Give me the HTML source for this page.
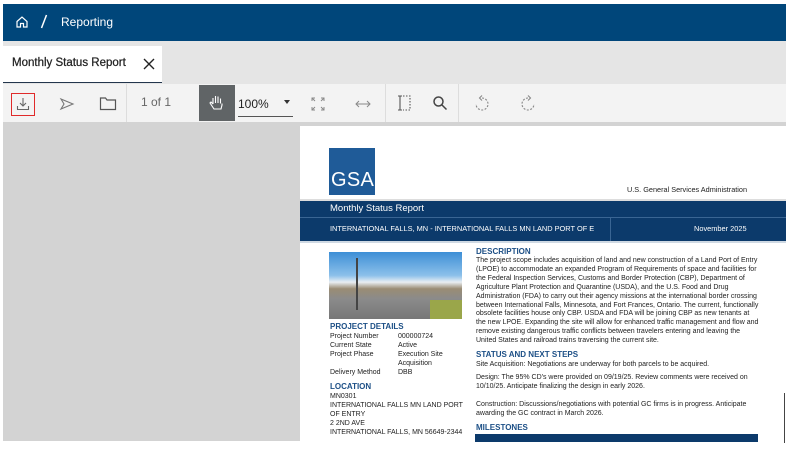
<!DOCTYPE html>
<html><head><meta charset="utf-8"><style>
*{margin:0;padding:0;box-sizing:border-box}
body{width:786px;height:454px;overflow:hidden;background:#fff;font-family:"Liberation Sans",sans-serif;position:relative}
.a{position:absolute}
.t{position:absolute;font-size:7px;color:#222;white-space:nowrap;line-height:9px}
.h{position:absolute;font-size:8px;font-weight:bold;color:#1c4f86;white-space:nowrap}
.ico{position:absolute}
</style></head><body>
<div class="a" style="left:3px;top:4px;width:783px;height:37px;background:#00467a"></div>
<svg class="ico" style="left:15px;top:15px" width="14" height="14" viewBox="0 0 14 14" fill="none" stroke="#fff" stroke-width="1.2"><path d="M2 6.5L7 2l5 4.5V12H8.5V8.5h-3V12H2z"/></svg>
<svg class="ico" style="left:40px;top:14px" width="8" height="15" viewBox="0 0 8 15" stroke="#fff" stroke-width="1.5"><path d="M6.5 1L1.5 14"/></svg>
<div class="a" style="left:61px;top:15px;color:#fff;font-size:12px">Reporting</div>

<div class="a" style="left:3px;top:41px;width:783px;height:43px;background:#e5e5e5"></div>
<div class="a" style="left:3px;top:46px;width:159px;height:37px;background:#fff;border-bottom:1.5px solid #23364d"></div>
<div class="a" style="left:12px;top:57px;font-size:11.5px;color:#222;-webkit-text-stroke:0.25px #222">Monthly Status Report</div>
<svg class="ico" style="left:143px;top:58px" width="12" height="12" viewBox="0 0 12 12" stroke="#222" stroke-width="1.4"><path d="M1 1l10 10M11 1L1 11"/></svg>

<div class="a" style="left:3px;top:84px;width:783px;height:38px;background:#f3f3f3"></div>
<div class="a" style="left:126px;top:84px;width:1px;height:38px;background:#ddd"></div>
<div class="a" style="left:385px;top:84px;width:1px;height:38px;background:#ddd"></div>
<div class="a" style="left:458px;top:84px;width:1px;height:38px;background:#ddd"></div>
<div class="a" style="left:11px;top:93px;width:24px;height:23px;border:1.5px solid #e02a2a"></div>
<svg class="ico" style="left:15px;top:96px" width="16" height="16" viewBox="0 0 16 16" fill="none" stroke="#666" stroke-width="1.1"><path d="M8 2v8M5 7l3 3 3-3M2.5 10v3.5h11V10"/></svg>
<svg class="ico" style="left:59px;top:97px" width="16" height="14" viewBox="0 0 16 14" fill="none" stroke="#777" stroke-width="1.1"><path d="M2 2l12 5-12 5 3-5z"/></svg>
<svg class="ico" style="left:99px;top:96px" width="18" height="15" viewBox="0 0 18 15" fill="none" stroke="#555" stroke-width="1.2"><path d="M1.5 2h5l1.5 2h8.5v9.5h-15z"/></svg>
<div class="a" style="left:141px;top:95px;font-size:12px;color:#666">1 of 1</div>
<div class="a" style="left:199px;top:85px;width:36px;height:36px;background:#606466"></div>
<svg class="ico" style="left:207px;top:93px" width="20" height="20" viewBox="0 0 20 20" fill="none" stroke="#fff" stroke-width="1.1"><path d="M6 11V5M8.5 10V3M11 10V3.5M13.5 10.5V5.5M6 11l-2-2-1 1 4 6h7l1-4v-1.5"/></svg>
<div class="a" style="left:238px;top:97px;font-size:12px;color:#222">100%</div>
<div class="a" style="left:238px;top:116px;width:55px;height:1px;background:#555"></div>
<div class="a" style="left:284px;top:100px;border-left:3px solid transparent;border-right:3px solid transparent;border-top:4px solid #333"></div>
<svg class="ico" style="left:310px;top:96px" width="16" height="16" viewBox="0 0 16 16" fill="none" stroke="#888" stroke-width="1"><path d="M2 5V2h3M2 2l3 3M14 5V2h-3M14 2l-3 3M2 11v3h3M2 14l3-3M14 11v3h-3M14 14l-3-3"/></svg>
<svg class="ico" style="left:354px;top:98px" width="18" height="12" viewBox="0 0 18 12" fill="none" stroke="#888" stroke-width="1"><path d="M2 6h14M5 3L2 6l3 3M13 3l3 3-3 3"/></svg>
<svg class="ico" style="left:396px;top:94px" width="16" height="18" viewBox="0 0 16 18" fill="none" stroke="#555" stroke-width="1.1"><path d="M2 2h4M2 16h4M4 2v14"/><path d="M7 2h7v14H7" stroke-dasharray="1.5 1.5"/></svg>
<svg class="ico" style="left:432px;top:95px" width="16" height="16" viewBox="0 0 16 16" fill="none" stroke="#444" stroke-width="1.5"><circle cx="6.5" cy="6.5" r="4.5"/><path d="M10 10l4.5 4.5"/></svg>
<svg class="ico" style="left:474px;top:94px" width="16" height="18" viewBox="0 0 16 18" fill="none" stroke="#888" stroke-width="1.1"><path d="M8 4a6 6 0 1 1-6 6" stroke-dasharray="2 1.5"/><path d="M8 1.5L5.5 4 8 6.5"/></svg>
<svg class="ico" style="left:520px;top:94px" width="16" height="18" viewBox="0 0 16 18" fill="none" stroke="#888" stroke-width="1.1"><path d="M8 4a6 6 0 1 0 6 6" stroke-dasharray="2 1.5"/><path d="M8 1.5L10.5 4 8 6.5"/></svg>

<div class="a" style="left:3px;top:122px;width:783px;height:4px;background:#d3d3d3"></div>
<div class="a" style="left:3px;top:126px;width:297px;height:315px;background:#d3d3d3"></div>

<div class="a" style="left:329px;top:148px;width:46px;height:47px;background:#1f5b98"></div>
<div class="a" style="left:331px;top:170px;font-size:20px;line-height:20px;color:#fff;letter-spacing:0.3px">GSA</div>
<div class="t" style="left:627px;top:185px;font-size:7.3px">U.S. General Services Administration</div>
<div class="a" style="left:300px;top:199px;width:486px;height:2px;background:#ddd"></div>
<div class="a" style="left:300px;top:201px;width:486px;height:40px;background:#0c3a6b"></div>
<div class="a" style="left:300px;top:217px;width:486px;height:1px;background:#3a6593"></div>
<div class="a" style="left:610px;top:218px;width:1px;height:23px;background:#3a6593"></div>
<div class="t" style="left:330px;top:204px;font-size:9.5px;color:#fff">Monthly Status Report</div>
<div class="t" style="left:330px;top:224px;font-size:7.4px;color:#fff">INTERNATIONAL FALLS, MN - INTERNATIONAL FALLS MN LAND PORT OF E</div>
<div class="t" style="left:694px;top:224px;font-size:7.4px;color:#fff">November 2025</div>
<div class="a" style="left:300px;top:241px;width:486px;height:2px;background:#cfd9e3"></div>

<div class="a" style="left:329px;top:252px;width:133px;height:67px;background:linear-gradient(#3d8fd6 0%,#8cc0ea 35%,#e9eef2 45%,#9a8c74 55%,#8b8b8b 70%,#777 100%)"></div>
<div class="a" style="left:430px;top:300px;width:32px;height:19px;background:#9aa64a"></div>
<div class="a" style="left:356px;top:258px;width:2px;height:52px;background:#444"></div>

<div class="h" style="left:330px;top:322px">PROJECT DETAILS</div>
<div class="t" style="left:330px;top:332px">Project Number<br>Current State<br>Project Phase<br><br>Delivery Method</div>
<div class="t" style="left:398px;top:332px">000000724<br>Active<br>Execution Site<br>Acquisition<br>DBB</div>
<div class="h" style="left:330px;top:382px">LOCATION</div>
<div class="t" style="left:330px;top:392px">MN0301<br>INTERNATIONAL FALLS MN LAND PORT<br>OF ENTRY<br>2 2ND AVE<br>INTERNATIONAL FALLS, MN 56649-2344</div>

<div class="h" style="left:476px;top:247px">DESCRIPTION</div>
<div class="t" style="left:476px;top:257px;line-height:8.9px">The project scope includes acquisition of land and new construction of a Land Port of Entry<br>(LPOE) to accommodate an expanded Program of Requirements of space and facilities for<br>the Federal Inspection Services, Customs and Border Protection (CBP), Department of<br>Agriculture Plant Protection and Quarantine (USDA), and the U.S. Food and Drug<br>Administration (FDA) to carry out their agency missions at the international border crossing<br>between International Falls, Minnesota, and Fort Frances, Ontario. The current, functionally<br>obsolete facilities house only CBP. USDA and FDA will be joining CBP as new tenants at<br>the new LPOE. Expanding the site will allow for enhanced traffic management and flow and<br>remove existing dangerous traffic conflicts between travelers entering and leaving the<br>United States and railroad trains traversing the current site.</div>
<div class="h" style="left:476px;top:350px">STATUS AND NEXT STEPS</div>
<div class="t" style="left:476px;top:360px">Site Acquisition: Negotiations are underway for both parcels to be acquired.</div>
<div class="t" style="left:476px;top:373px">Design: The 95% CD's were provided on 09/19/25. Review comments were received on<br>10/10/25. Anticipate finalizing the design in early 2026.</div>
<div class="t" style="left:476px;top:400px">Construction: Discussions/negotiations with potential GC firms is in progress. Anticipate<br>awarding the GC contract in March 2026.</div>
<div class="h" style="left:476px;top:423px">MILESTONES</div>
<div class="a" style="left:475px;top:434px;width:283px;height:8px;background:#0c3a6b"></div>
<div class="a" style="left:784px;top:393px;width:1px;height:50px;background:#444"></div>
</body></html>
